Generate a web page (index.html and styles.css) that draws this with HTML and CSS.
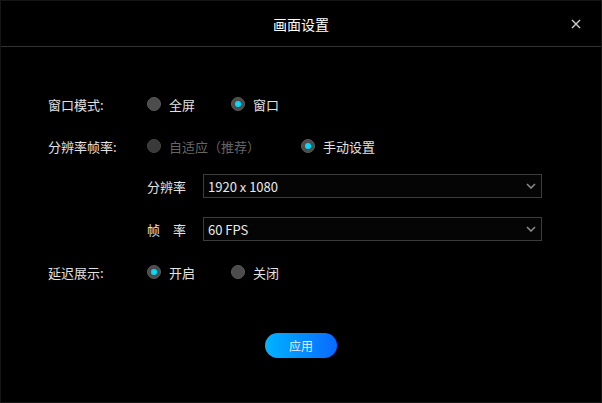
FILE: index.html
```html
<!doctype html>
<html lang="zh-CN">
<head>
    <meta charset="UTF-8">
    <title>画面设置</title>
    <link rel="stylesheet" href="styles.css">
</head>
<body>
<div class="dialog">
    <div class="dialog-head">
        <span class="dialog-title">画面设置</span>
        <a href="javascript:;" class="close">
            <svg width="10" height="10" viewBox="0 0 10 10"><path d="M1 1L9 9M9 1L1 9" stroke="#cfcfcf" stroke-width="1.4" fill="none"/></svg>
        </a>
    </div>
    <div class="dialog-body">
        <div class="row row-first">
            <span class="label">窗口模式:</span>
            <label class="opt"><span class="radio"></span>全屏</label>
            <label class="opt"><span class="radio on"></span>窗口</label>
        </div>
        <div class="row row-second">
            <span class="label">分辨率帧率:</span>
            <label class="opt opt-wide disabled"><span class="radio"></span>自适应（推荐）</label>
            <label class="opt"><span class="radio on"></span>手动设置</label>
        </div>
        <div class="row row-select row-res">
            <span class="sublabel">分辨率</span>
            <div class="select">
                <span>1920 x 1080</span>
                <svg width="10" height="6" viewBox="0 0 10 6"><path d="M1 1L5 5L9 1" stroke="#8a8a8a" stroke-width="1.6" fill="none"/></svg>
            </div>
        </div>
        <div class="row row-select row-fps">
            <span class="sublabel">帧　率</span>
            <div class="select">
                <span>60 FPS</span>
                <svg width="10" height="6" viewBox="0 0 10 6"><path d="M1 1L5 5L9 1" stroke="#8a8a8a" stroke-width="1.6" fill="none"/></svg>
            </div>
        </div>
        <div class="row row-delay">
            <span class="label">延迟展示:</span>
            <label class="opt"><span class="radio on"></span>开启</label>
            <label class="opt"><span class="radio"></span>关闭</label>
        </div>
        <div class="foot">
            <a href="javascript:;" class="btn">应用</a>
        </div>
    </div>
</div>
</body>
</html>
```
FILE: styles.css
```css
* {margin: 0; padding: 0; box-sizing: border-box; text-decoration: none;}
body {background: #000; font-family: "Noto Sans CJK SC", "Microsoft YaHei", sans-serif; font-size: 13px; color: #e2e2e2;}
.dialog {width: 602px; height: 403px; border: 1px solid #161616; background: #000;}
.dialog-head {height: 46px; border-bottom: 1px solid #333; display: flex; align-items: center; justify-content: center; position: relative;}
.dialog-title {font-size: 14px; color: #fff;}
.close {position: absolute; right: 20px; top: 18px; display: flex;}
.dialog-body {padding: 47px 0 0 47px;}
.row {display: flex; align-items: center; height: 20px;}
.row-second {margin-top: 22px;}
.row-select {height: 24px;}
.row-res {margin-top: 18px;}
.row-fps {margin-top: 19px;}
.row-delay {margin-top: 21px;}
.label {width: 99px;}
.sublabel {width: 99px; padding-left: 99px; box-sizing: content-box; display: none;}
.row-select .sublabel {display: block; width: 56px; padding-left: 99px; box-sizing: content-box;}
.opt {display: flex; align-items: center; min-width: 84px;}
.opt-wide {width: 154px;}
.opt.disabled {color: #666;}
.radio {width: 14px; height: 14px; border-radius: 50%; background: #4c4c4c; border: 1px solid #5a5a5a; margin-right: 8px; display: flex; align-items: center; justify-content: center;}
.disabled .radio {background: #3a3a3a; border-color: #444;}
.radio.on::after {content: ""; width: 6px; height: 6px; border-radius: 50%; background: #00dcff;}
.select {width: 339px; height: 24px; border: 1px solid #3c3c3c; background: #050505; display: flex; align-items: center; justify-content: space-between; padding: 0 5px 0 4px; color: #eaeaea;}
.foot {display: flex; justify-content: center; padding-right: 47px; margin-top: 51px;}
.btn {width: 72px; height: 25px; border-radius: 13px; background: linear-gradient(to right, #00b2ff, #0a6aff); color: #e8f2ff; font-size: 12px; display: flex; align-items: center; justify-content: center; margin-left: 0;}
```
